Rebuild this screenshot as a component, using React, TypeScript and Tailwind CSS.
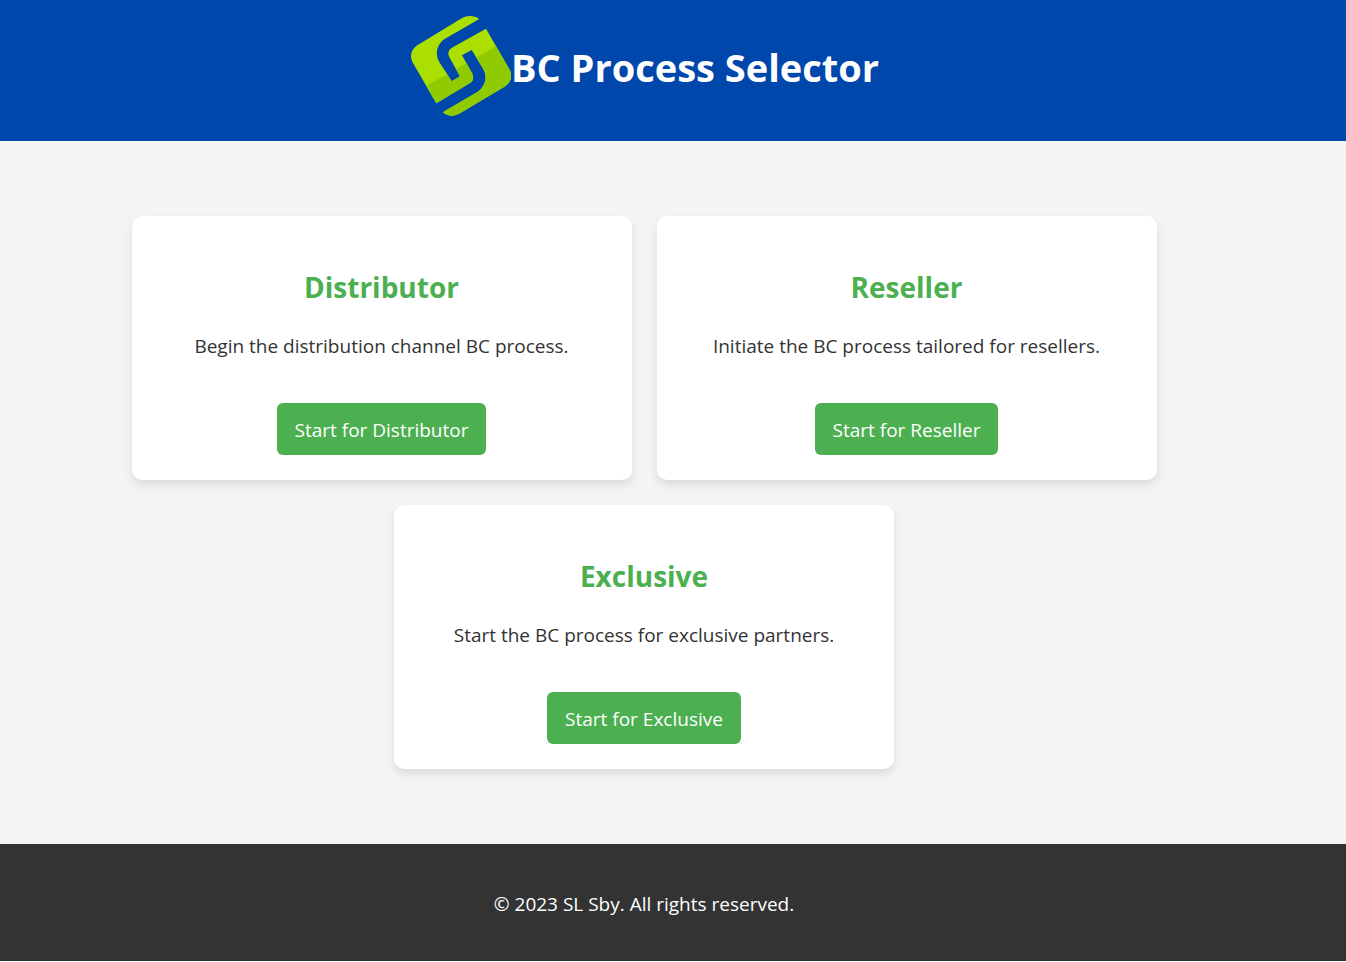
import React from "react";

type Channel = { title: string; description: string };

const channels: Channel[] = [
  { title: "Distributor", description: "Begin the distribution channel BC process." },
  { title: "Reseller", description: "Initiate the BC process tailored for resellers." },
  { title: "Exclusive", description: "Start the BC process for exclusive partners." },
];

function Logo() {
  return (
    <svg viewBox="0 0 100 100" className="size-[100px] shrink-0" role="img" aria-label="SL logo">
      <defs>
        <clipPath id="mark">
          <path d="M50.7 2.3C56 -.5 62.5 -1.2 68.3 3L34 22.8C26.500 27.500 23.500 37 28 45.500L40.700 65.300L49 60.300L38.500 41.500C36.200 37.500 37.500 33.500 41.700 31.300L75 12.700L98.500 53.500C102 60 100 67 93 71L49 97.300C43 100.800 36.500 100.500 31.700 96.300L65.500 76.500C74.500 71 76.800 61 72.300 53L60.700 34L51 39.300L61 57C63 60.800 62.500 64.500 59.500 66.800L25.300 87.300L1.700 46.500C-1.700 40 .500 33 6.700 29Z" />
        </clipPath>
      </defs>
      <g clipPath="url(#mark)">
        <rect x="-2" y="-2" width="104" height="104" fill="#aadf00" />
        <path d="M-2 79.800L102 20.600V102H-2Z" fill="#8fcb00" />
      </g>
    </svg>
  );
}

function ChannelCard({ title, description }: Channel) {
  return (
    <section className="flex w-[500px] max-w-full flex-col items-center rounded-[10px] bg-white px-[25px] pt-12 pb-[25px] text-center shadow-[0_5px_10px_rgba(0,0,0,0.1)]">
      <h2 className="text-[28px] leading-[46px] font-bold text-[#4caf50]">{title}</h2>
      <p className="mt-[21px] text-[19px] leading-[30px]">{description}</p>
      <button
        type="button"
        className="mt-[42px] cursor-pointer rounded-md bg-[#4caf50] px-[18px] pt-[13px] pb-[11px] text-[19px] leading-[28px] text-white hover:bg-[#43a047]"
      >
        Start for {title}
      </button>
    </section>
  );
}

export default function App() {
  return (
    <div className="bg-[#f4f4f4] font-['Segoe_UI','Open_Sans','Noto_Sans',sans-serif] text-[#333]">
      <header className="flex items-start justify-center bg-[#0047ab] pt-4 pr-[56px] pb-[25px] text-white">
        <Logo />
        <h1 className="pt-5 text-[38px] leading-[62px] font-bold">BC Process Selector</h1>
      </header>
      <main className="flex flex-wrap justify-center gap-[25px] py-[75px] pr-[58px]">
        {channels.map((channel) => (
          <ChannelCard key={channel.title} {...channel} />
        ))}
      </main>
      <footer className="bg-[#333] pt-[46px] pr-[58px] pb-[43px] text-center text-[19px] leading-[28px] text-white">
        <p>© 2023 SL Sby. All rights reserved.</p>
      </footer>
    </div>
  );
}
